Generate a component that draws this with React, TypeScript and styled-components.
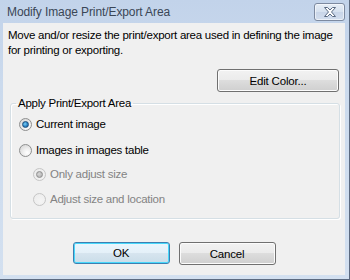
import React from 'react'
import styled, { createGlobalStyle, css } from 'styled-components'

const GlobalStyle = createGlobalStyle`
	html, body {
		margin: 0;
		padding: 0;
		background: #ffffff;
	}
	body {
		font-family: "Liberation Sans", Arial, sans-serif;
		font-size: 11.5px;
		letter-spacing: -0.25px;
		color: #000000;
	}
`

const Window = styled.div`
	width: 350px;
	height: 280px;
	box-sizing: border-box;
	display: flex;
	flex-direction: column;
	padding: 0 4px 4px 3px;
	background: linear-gradient(180deg, #c2d3ea 0%, #cbdaed 30%, #d3e0f0 100%);
	border-right: 1px solid #5c6a80;
	border-bottom: 1px solid #5c6a80;
`

const TitleBar = styled.div`
	height: 23px;
	display: flex;
	align-items: flex-start;
	justify-content: space-between;
	flex-shrink: 0;
`

const Title = styled.span`
	margin: 5px 0 0 4px;
	font-size: 12px;
	letter-spacing: -0.1px;
	line-height: 15px;
	color: #3a4656;
`

const CloseButton = styled.div`
	margin: 3px 0 0 0;
	width: 29px;
	height: 16px;
	border: 1px solid #7d8aa0;
	border-radius: 3px;
	box-shadow: inset 0 0 0 1px rgba(255, 255, 255, 0.55);
	background: linear-gradient(180deg, #e6edf6 0%, #d6e1ef 50%, #c8d5e8 51%, #d3deee 100%);
	display: flex;
	align-items: center;
	justify-content: center;
`

const Client = styled.div`
	flex: 1;
	background: #f0f0f0;
	display: flex;
	flex-direction: column;
	padding-top: 5px;
`

const Description = styled.p`
	margin: 0 0 0 5px;
	line-height: 15px;
	white-space: nowrap;
`

const EditRow = styled.div`
	display: flex;
	justify-content: flex-end;
	margin-top: 11px;
	padding-right: 6px;
`

const Button = styled.button<{ $default?: boolean; $width: number }>`
	width: ${(p) => p.$width}px;
	height: ${(p) => (p.$default ? 22 : 23)}px;
	box-sizing: border-box;
	padding: 0;
	font-family: "Liberation Sans", Arial, sans-serif;
	font-size: 11.5px;
	letter-spacing: -0.2px;
	color: #000000;
	border: 1px solid #707070;
	border-radius: 3px;
	background: linear-gradient(180deg, #f2f2f2 0%, #ebebeb 49%, #dddddd 50%, #cfcfcf 100%);
	box-shadow: inset 0 0 0 1px #fcfcfc;
	${(p) =>
		p.$default &&
		css`
			border-color: #3c7fb1;
			box-shadow: inset 0 0 0 1px #48d8fb;
			background: linear-gradient(180deg, #eaf6fd 0%, #e4f0f8 49%, #d7e5ef 50%, #c9dde9 100%);
		`}
`

const GroupBox = styled.fieldset`
	margin: 4px 5px 0 7px;
	padding: 0 0 11px 0;
	border: 1px solid #d5dfe5;
	border-radius: 3px;
	box-shadow: inset 1px 1px 0 #ffffff, 1px 1px 0 #ffffff;
`

const Legend = styled.legend`
	margin-left: 5px;
	padding: 0 2px;
	line-height: 15px;
`

const OptionList = styled.div`
	display: flex;
	flex-direction: column;
	padding-top: 6px;
`

const Option = styled.label<{ $indent?: boolean; $disabled?: boolean; $after: number }>`
	display: flex;
	align-items: center;
	gap: 4px;
	height: 15px;
	margin-left: ${(p) => (p.$indent ? 22 : 8)}px;
	margin-bottom: ${(p) => p.$after}px;
	color: ${(p) => (p.$disabled ? '#838383' : '#000000')};
	line-height: 15px;
`

const Radio = styled.span<{ $checked?: boolean; $disabled?: boolean }>`
	width: 13px;
	height: 13px;
	box-sizing: border-box;
	border-radius: 50%;
	border: 1px solid ${(p) => (p.$disabled ? '#c5c5c5' : '#8e8f8f')};
	background: ${(p) =>
		p.$disabled
			? 'radial-gradient(circle at 60% 65%, #f4f4f4 0%, #ebebeb 100%)'
			: 'radial-gradient(circle at 65% 70%, #ffffff 0%, #f0f0f0 35%, #cfcfcf 100%)'};
	display: flex;
	align-items: center;
	justify-content: center;
	flex-shrink: 0;
	&::after {
		content: '';
		display: ${(p) => (p.$checked ? 'block' : 'none')};
		width: 7px;
		height: 7px;
		box-sizing: border-box;
		border-radius: 50%;
		border: 1px solid ${(p) => (p.$disabled ? '#8f8f8f' : '#1b4e7c')};
		background: ${(p) =>
			p.$disabled
				? 'radial-gradient(circle at 40% 40%, #d8d8d8 0%, #a8a8a8 100%)'
				: 'radial-gradient(circle at 40% 40%, #7cd0f5 0%, #2a83c5 55%, #1d5a96 100%)'};
	}
`

const Footer = styled.div`
	display: flex;
	justify-content: center;
	gap: 9px;
	margin-top: 23px;
`

const CloseIcon = () => (
	<svg width="14" height="10" viewBox="0 0 14 10">
		<path
			d="M1.5 0.5 L4.5 0.5 L7 3 L9.5 0.5 L12.5 0.5 L8.5 5 L12.5 9.5 L9.5 9.5 L7 7 L4.5 9.5 L1.5 9.5 L5.5 5 Z"
			fill="#ffffff"
			stroke="#5a6a82"
			strokeWidth="1"
			strokeLinejoin="round"
		/>
	</svg>
)

export default function App() {
	return (
		<>
			<GlobalStyle />
			<Window>
				<TitleBar>
					<Title>Modify Image Print/Export Area</Title>
					<CloseButton>
						<CloseIcon />
					</CloseButton>
				</TitleBar>
				<Client>
					<Description>
						Move and/or resize the print/export area used in defining the image
						<br />
						for printing or exporting.
					</Description>
					<EditRow>
						<Button $width={122}>Edit Color...</Button>
					</EditRow>
					<GroupBox>
						<Legend>Apply Print/Export Area</Legend>
						<OptionList>
							<Option $after={11}>
								<Radio $checked />
								Current image
							</Option>
							<Option $after={9}>
								<Radio />
								Images in images table
							</Option>
							<Option $indent $disabled $after={10}>
								<Radio $checked $disabled />
								Only adjust size
							</Option>
							<Option $indent $disabled $after={0}>
								<Radio $disabled />
								Adjust size and location
							</Option>
						</OptionList>
					</GroupBox>
					<Footer>
						<Button $default $width={97}>OK</Button>
						<Button $width={97}>Cancel</Button>
					</Footer>
				</Client>
			</Window>
		</>
	)
}
